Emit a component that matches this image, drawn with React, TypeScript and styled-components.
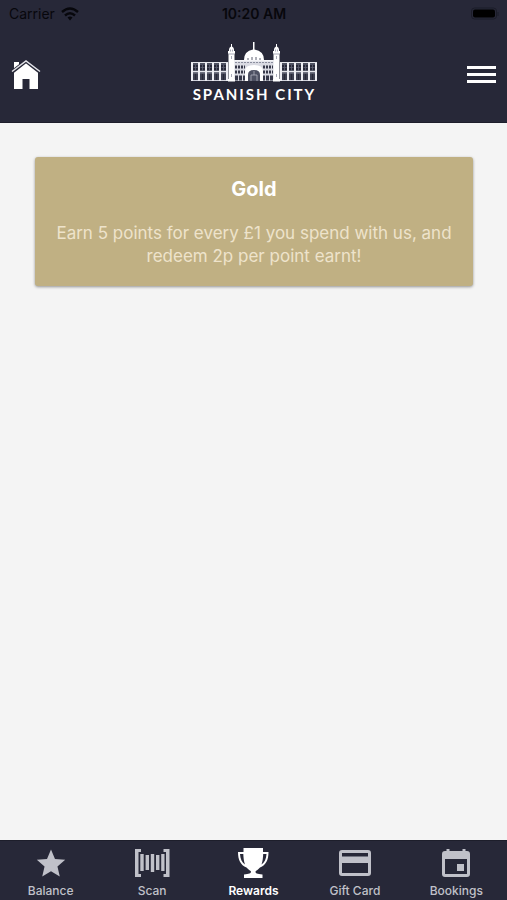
import React from "react";
import styled, { createGlobalStyle } from "styled-components";

const GlobalStyle = createGlobalStyle`
  * { box-sizing: border-box; }
  body {
    margin: 0;
    background: #f4f4f4;
    font-family: Inter, "Liberation Sans", sans-serif;
  }
`;

const Page = styled.div`
  min-height: 100vh;
  display: flex;
  flex-direction: column;
`;

const Top = styled.header`
  background: #272838;
  border-bottom: 1px solid #1d1e2b;
`;

const StatusBar = styled.div`
  height: 28px;
  padding: 0 8px 0 9px;
  display: grid;
  grid-template-columns: 1fr auto 1fr;
  align-items: center;
  color: #07070c;
  font-size: 14px;
  line-height: 20px;
`;

const Carrier = styled.div`
  display: flex;
  align-items: center;
  gap: 6px;
`;

const Clock = styled.time`
  font-weight: 600;
`;

const BatteryIcon = styled.svg`
  justify-self: end;
`;

const NavBar = styled.div`
  height: 94px;
  padding: 0 11px;
  display: grid;
  grid-template-columns: 1fr auto 1fr;
  align-items: center;
`;

const IconButton = styled.button<{ $end?: boolean }>`
  justify-self: ${(p) => (p.$end ? "end" : "start")};
  display: flex;
  padding: 0;
  border: 0;
  background: none;
  color: #fff;
  cursor: pointer;
`;

const Brand = styled.a`
  display: flex;
  flex-direction: column;
  align-items: center;
  gap: 4px;
  padding-bottom: 8px;
  color: #fff;
  text-decoration: none;
`;

const BrandName = styled.span`
  padding-left: 2px;
  font: 700 15px/16px Lato, sans-serif;
  letter-spacing: 2px;
  white-space: nowrap;
`;

const Content = styled.main`
  flex: 1;
  padding: 34px 34px 34px 35px;
`;

const Card = styled.article`
  padding: 20px 16px 18px;
  border-radius: 3px;
  background: #c0b083;
  box-shadow: 0 1px 3px rgba(0, 0, 0, 0.4);
  text-align: center;
`;

const CardTitle = styled.h1`
  margin: 0 0 21px;
  color: #fff;
  font-size: 20px;
  font-weight: 700;
  line-height: 24px;
`;

const CardText = styled.p`
  margin: 0;
  color: #eee3cb;
  font-size: 17px;
  line-height: 23px;
`;

const TabBar = styled.nav`
  height: 60px;
  padding-top: 6px;
  display: grid;
  grid-template-columns: repeat(5, 1fr);
  border-top: 1px solid #1d1e2b;
  background: #272838;
`;

const Tab = styled.a<{ $active?: boolean }>`
  display: flex;
  flex-direction: column;
  align-items: center;
  gap: 4px;
  color: ${(p) => (p.$active ? "#fff" : "#c0c1c9")};
  font-size: 12px;
  font-weight: ${(p) => (p.$active ? 600 : 500)};
  line-height: 16px;
  text-decoration: none;
`;

const TabIcon = styled.svg`
  width: 36px;
  height: 32px;
  fill: currentColor;
`;

const tabs = [
  {
    label: "Balance",
    icon: (
      <path
        transform="translate(.96 -.3) scale(1.42)"
        d="M12 17.270 18.180 21 16.540 13.970 22 9.240 14.810 8.630 12 2 9.190 8.630 2 9.240 7.460 13.970 5.820 21Z"
      />
    ),
  },
  {
    label: "Scan",
    icon: (
      <path d="M1 2H7V5H4.500V27H7V30H1ZM35.500 2H29.500V5H32V27H29.500V30H35.500ZM6.300 7H9.700V24H6.300ZM11.600 8H15V23H11.600ZM16.800 7H20.200V25H16.800ZM22 8H25.400V23H22ZM27.200 7H30.500V24H27.200Z" />
    ),
  },
  {
    label: "Rewards",
    icon: (
      <path
        fillRule="evenodd"
        d="M8.500 1H28V5H33.500C33.500 13 31 18 25 20.500C23.500 22.500 21 23.500 20.500 24.500C20.500 26.500 22 27 27.500 27.500V31H9V27.500C14 27 16 26.500 16 24.500C15.500 23.500 13 22.500 11.500 20.500C5.500 18 3 13 3 5H8.500ZM5 7C5.300 12 7 15.500 10 17.500C8.800 14 8.500 11 8.300 7ZM31.500 7H28.200C28 11 27.700 14 26.500 17.500C29.500 15.500 31.200 12 31.500 7Z"
      />
    ),
  },
  {
    label: "Gift Card",
    icon: (
      <path
        fillRule="evenodd"
        d="M5 3H31Q34 3 34 6V26Q34 29 31 29H5Q2 29 2 26V6Q2 3 5 3ZM5 6V9.500H31V6ZM5 16V26H31V16Z"
      />
    ),
  },
  {
    label: "Bookings",
    icon: (
      <path
        fillRule="evenodd"
        d="M8.500 2H11.500V4H24.500V2H27.500V4H29Q32 4 32 7V27Q32 30 29 30H7Q4 30 4 27V7Q4 4 7 4H8.500ZM7 12V27H29V12ZM19 17H26V24H19Z"
      />
    ),
  },
];

function Arcade({ x }: { x: number }) {
  return (
    <g transform={`translate(${x} 0)`}>
      <path d="M0 22.500H37" stroke="#e4e5eb" />
      <path d="M0 24H37" stroke="#777a8b" />
      <path d="M0 31.500H37" stroke="#e4e5eb" strokeWidth="1.500" />
      <path d="M0 33H37" stroke="#8f91a1" />
      <path d="M0 40.500H37" stroke="#d0d1da" />
      {[1, 8, 15, 22, 29, 36].map((p) => (
        <path key={p} d={`M${p} 23V41`} stroke="#eeeef3" strokeWidth="2" />
      ))}
      {[4.500, 11.500, 18.500, 25.500, 32.500].map((p) => (
        <path
          key={p}
          d={`M${p - 2} 27.500H${p + 2}M${p} 25V31M${p - 1.500} 34V40M${p + 1.500} 34V40`}
          stroke="#5f6275"
          strokeWidth="0.8"
        />
      ))}
    </g>
  );
}

function Tower({ x }: { x: number }) {
  return (
    <g transform={`translate(${x} 0)`}>
      <path
        d="M3 4H4V6.500Q6 7.500 6 9.500V11H7V13.500H6.500V39H7V41.500H0V39H.5V13.500H0V11H1V9.500Q1 7.500 3 6.500Z"
        fill="#fff"
      />
      <path d="M2.500 9.500V11.500M4.500 9.500V11.500M1 14H6M3.500 16V19M3.500 34V37" stroke="#82859a" strokeWidth="0.7" />
    </g>
  );
}

function Landmark() {
  return (
    <svg width="126" height="42" viewBox="0 0 126 42" fill="none" aria-hidden="true">
      <Arcade x={0} />
      <Arcade x={89} />
      <path d="M43 20H83V41H43Z" fill="#d9dae2" />
      <path
        d="M44 27H54M44 32H54M72 27H82M72 32H82"
        stroke="#363849"
        strokeWidth="3"
        strokeDasharray="2 1"
      />
      <path d="M44 38H55M71 38H82" stroke="#363849" strokeWidth="5" strokeDasharray="3 1" />
      <path d="M44 22.500H82" stroke="#8b8e9e" strokeDasharray="2 1" />
      <path d="M53 20Q53 11 62 9.500V2H63.500V9.500Q73 11 73 20V21H53Z" fill="#fff" />
      <path d="M57 20V18M61 20V17M65 20V17M69 20V18" stroke="#5c5f70" />
      <path d="M44 20H82V21.500H44Z" fill="#f4f4f7" />
      <path d="M54 41V31Q54 25 63 25Q72 25 72 31V41H69V35Q69 30 63 30Q57 30 57 35V41Z" fill="#fff" />
      <path d="M57 41V35Q57 30 63 30Q69 30 69 35V41Z" fill="#4d5062" />
      <path d="M60 41V35H66V41M63 31V35" stroke="#aeb0bc" strokeWidth="0.8" />
      <Tower x={37} />
      <Tower x={82} />
    </svg>
  );
}

export default function App() {
  return (
    <Page>
      <GlobalStyle />
      <Top>
        <StatusBar>
          <Carrier>
            <span>Carrier</span>
            <svg width="18" height="14" viewBox="0 0 18 14" fill="none" stroke="currentColor" strokeWidth="2.400" aria-hidden="true">
              <path d="M1 5Q9 -2 17 5M4 8.500Q9 4 14 8.500" />
              <path d="M6.500 10.500Q9 8.500 11.500 10.500L9 13.500Z" fill="currentColor" stroke="none" />
            </svg>
          </Carrier>
          <Clock>10:20 AM</Clock>
          <BatteryIcon width="28" height="14" viewBox="0 0 28 14" aria-hidden="true">
            <rect x=".5" y="1" width="25" height="11" rx="3" fill="none" stroke="#1b1c28" />
            <rect x="2" y="2.500" width="22" height="8" rx="2" fill="#000" />
            <path d="M27 5V9" stroke="#1b1c28" />
          </BatteryIcon>
        </StatusBar>
        <NavBar>
          <IconButton aria-label="Home">
            <svg width="30" height="30" viewBox="0 0 30 30" fill="currentColor" aria-hidden="true">
              <path d="M3 2H8V5L3 9.500Z" />
              <path d="M3 12 15 2.500 27 12V29H18.500V19H11.500V29H3Z" />
              <path d="M1 12 15 1 29 12" fill="none" stroke="#272838" strokeWidth="3.500" />
              <path d="M1 11.500 15 1 29 11.500" fill="none" stroke="#e3e3e8" strokeWidth="1.500" />
            </svg>
          </IconButton>
          <Brand href="#home" aria-label="Spanish City">
            <Landmark />
            <BrandName>SPANISH CITY</BrandName>
          </Brand>
          <IconButton $end aria-label="Menu">
            <svg width="29" height="18" viewBox="0 0 29 18" fill="currentColor" aria-hidden="true">
              <path d="M0 0H29V3H0ZM0 7H29V10H0ZM0 14H29V17H0Z" />
            </svg>
          </IconButton>
        </NavBar>
      </Top>
      <Content>
        <Card>
          <CardTitle>Gold</CardTitle>
          <CardText>Earn 5 points for every £1 you spend with us, and redeem 2p per point earnt!</CardText>
        </Card>
      </Content>
      <TabBar aria-label="Main">
        {tabs.map(({ label, icon }) => (
          <Tab
            key={label}
            href={`#${label.toLowerCase().replace(" ", "-")}`}
            $active={label === "Rewards"}
            aria-current={label === "Rewards" ? "page" : undefined}
          >
            <TabIcon viewBox="0 0 36 32" aria-hidden="true">{icon}</TabIcon>
            {label}
          </Tab>
        ))}
      </TabBar>
    </Page>
  );
}
